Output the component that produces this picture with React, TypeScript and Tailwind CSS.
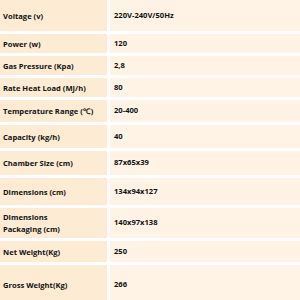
const specs: { label: string; value: string; h: string }[] = [
  { label: "Voltage (v)", value: "220V-240V/50Hz", h: "h-[31px]" },
  { label: "Power (w)", value: "120", h: "h-[19px]" },
  { label: "Gas Pressure (Kpa)", value: "2,8", h: "h-[19px]" },
  { label: "Rate Heat Load (MJ/h)", value: "80", h: "h-[19px]" },
  { label: "Temperature Range (℃)", value: "20-400", h: "h-[22px]" },
  { label: "Capacity (kg/h)", value: "40", h: "h-[23px]" },
  { label: "Chamber Size (cm)", value: "87x65x39", h: "h-[24px]" },
  { label: "Dimensions (cm)", value: "134x94x127", h: "h-[27px]" },
  { label: "Dimensions Packaging (cm)", value: "140x97x138", h: "h-[30px]" },
  { label: "Net Weight(Kg)", value: "250", h: "h-[21px]" },
  { label: "Gross Weight(Kg)", value: "266", h: "h-[40px]" },
];

export default function App() {
  return (
    <div className="w-[300px] h-[300px] overflow-hidden bg-white font-['Open_Sans',sans-serif] text-[7.6px] font-bold text-[#111]">
      <div className="grid grid-cols-[107px_1fr] gap-[3px]">
        {specs.map((s) => (
          <div key={s.label} className="contents">
            <div className={`${s.h} bg-[#fdebd3] pl-[3px] pr-1 flex items-center leading-[12px]`}>
              <span className={s.label.startsWith("Dimensions Packaging") ? "w-[70px]" : ""}>
                {s.label}
              </span>
            </div>
            <div className={`${s.h} bg-[#fff3e5] pl-[4px] flex items-center`}>{s.value}</div>
          </div>
        ))}
      </div>
    </div>
  );
}
